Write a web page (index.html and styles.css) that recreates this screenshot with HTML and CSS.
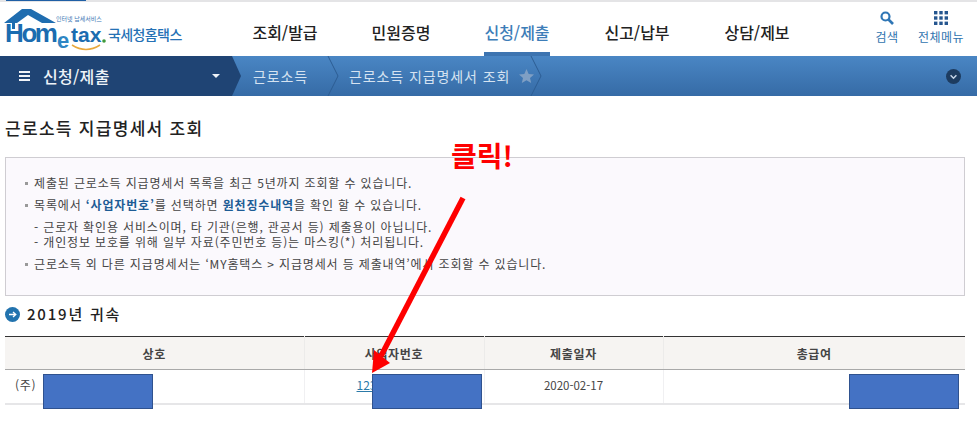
FILE: index.html
```html
<!DOCTYPE html>
<html lang="ko">
<head>
  <meta charset="UTF-8" />
  <meta name="viewport" content="width=device-width, initial-scale=1.0"/>
  <title>근로소득 지급명세서 조회</title>
  <link rel="stylesheet" href="styles.css">
</head>
<body>

  <div class="top-stripe"><span></span></div>

  <header class="site-header">
    <a class="logo">
      <svg width="190" height="54" viewBox="0 0 190 54">
        <path d="M4 21 L22 7 L31 7 L56 21 L42 21 L28 13 L17 21 L15 21 L15 27 L12 27 L12 21 Z" fill="#1f6db0"/>
        <text x="56" y="19" class="logo-small">인터넷 납세서비스</text>
        <text x="5" y="40" class="logo-home">Hom</text>
        <text x="57" y="46" class="logo-e">e</text>
        <text x="71" y="40" class="logo-tax">tax</text>
        <circle cx="104" cy="39" r="1.8" fill="#3f9a3c"/>
        <path d="M72 43 Q86 52 100 43" fill="none" stroke="#e9a83c" stroke-width="1.5"/>
        <text x="108" y="38" class="logo-name">국세청홈택스</text>
      </svg>
    </a>
    <nav class="main-nav">
      <a>조회/발급</a>
      <a>민원증명</a>
      <a class="active">신청/제출</a>
      <a>신고/납부</a>
      <a>상담/제보</a>
    </nav>
    <div class="tools">
      <a class="tool">
        <svg width="14" height="14" viewBox="0 0 14 14">
          <circle cx="5.5" cy="5.5" r="4" fill="none" stroke="#2f76b5" stroke-width="2.2"/>
          <path d="M8.5 8.5 L13 13" stroke="#2f76b5" stroke-width="2.6"/>
        </svg>
        <span>검색</span>
      </a>
      <a class="tool">
        <svg width="14" height="14" viewBox="0 0 14 14" fill="#25568f">
          <rect x="0" y="0" width="3.4" height="3.4"/><rect x="5.3" y="0" width="3.4" height="3.4"/><rect x="10.6" y="0" width="3.4" height="3.4"/>
          <rect x="0" y="5.3" width="3.4" height="3.4"/><rect x="5.3" y="5.3" width="3.4" height="3.4"/><rect x="10.6" y="5.3" width="3.4" height="3.4"/>
          <rect x="0" y="10.6" width="3.4" height="3.4"/><rect x="5.3" y="10.6" width="3.4" height="3.4"/><rect x="10.6" y="10.6" width="3.4" height="3.4"/>
        </svg>
        <span>전체메뉴</span>
      </a>
    </div>
  </header>

  <div class="crumbs">
    <div class="crumb-main">
      <span class="burger"><i></i><i></i><i></i></span>
      <span class="crumb-title">신청/제출</span>
      <span class="caret"></span>
    </div>
    <span class="crumb c1">근로소득</span>
    <svg class="chev" width="12" height="40" viewBox="0 0 12 40"><path d="M1 0 L11 20 L1 40" fill="none" stroke="#2c5d93" stroke-width="1"/></svg>
    <span class="crumb c2">근로소득 지급명세서 조회</span>
    <svg class="star" width="15" height="14" viewBox="0 0 15 14"><path d="M7.5 0 L9.7 4.9 L15 5.4 L11 9 L12.2 14 L7.5 11.3 L2.8 14 L4 9 L0 5.4 L5.3 4.9 Z" fill="#7f9fc4"/></svg>
    <svg class="chev c3" width="12" height="40" viewBox="0 0 12 40"><path d="M1 0 L11 20 L1 40" fill="none" stroke="#2c5d93" stroke-width="1"/></svg>
    <span class="more">
      <svg width="15" height="15" viewBox="0 0 15 15"><circle cx="7.5" cy="7.5" r="7.5" fill="#1d3c60"/><path d="M4.6 6.2 L7.5 9.2 L10.4 6.2" fill="none" stroke="#c6d5e6" stroke-width="1.5"/></svg>
    </span>
  </div>

  <main class="content">
    <h1 class="page-title">근로소득 지급명세서 조회</h1>

    <section class="notice">
      <p class="item">제출된 근로소득 지급명세서 목록을 최근 5년까지 조회할 수 있습니다.</p>
      <p class="item">목록에서 <b>‘사업자번호’</b>를 선택하면 <b>원천징수내역</b>을 확인 할 수 있습니다.</p>
      <div class="sub">
        <p>- 근로자 확인용 서비스이며, 타 기관(은행, 관공서 등) 제출용이 아닙니다.</p>
        <p>- 개인정보 보호를 위해 일부 자료(주민번호 등)는 마스킹(*) 처리됩니다.</p>
      </div>
      <p class="item">근로소득 외 다른 지급명세서는 ‘MY홈택스 &gt; 지급명세서 등 제출내역’에서 조회할 수 있습니다.</p>
    </section>

    <h2 class="year">
      <svg width="15" height="15" viewBox="0 0 15 15"><circle cx="7.5" cy="7.5" r="7.5" fill="#2273ae"/><path d="M4 7.5 H10.5 M8 5 L10.8 7.5 L8 10" fill="none" stroke="#fff" stroke-width="1.3"/></svg>
      2019년 귀속
    </h2>

    <table class="result">
      <colgroup>
        <col class="col-name"><col class="col-num"><col class="col-date"><col class="col-pay">
      </colgroup>
      <thead>
        <tr><th>상호</th><th>사업자번호</th><th>제출일자</th><th>총급여</th></tr>
      </thead>
      <tbody>
        <tr><td class="left">(주)</td><td><a class="num">123-45-67890</a></td><td class="date">2020-02-17</td><td></td></tr>
      </tbody>
    </table>
  </main>

  <!-- masked values and the annotation drawn on top of the capture -->
  <div class="mask m1"></div>
  <div class="mask m2"></div>
  <div class="mask m3"></div>
  <div class="click-label">클릭!</div>
  <svg class="arrow" width="110" height="185" viewBox="0 0 110 185">
    <path d="M101 8 L19 166" stroke="#fe0000" stroke-width="5.5" fill="none"/>
    <path d="M10 183 L12 160 L28 173 Z" fill="#fe0000"/>
  </svg>

</body>
</html>
```

FILE: styles.css
```css
body {
  margin: 0;
  font-family: "Noto Sans CJK KR", "Noto Sans", sans-serif;
  background-color: #fff;
  color: #333;
  overflow: hidden;
}
p, h1, h2 {
  margin: 0;
}

.top-stripe {
  height: 2px;
  background-color: #e4e4e6;
}
.top-stripe span {
  display: block;
  width: 80px;
  height: 1px;
  margin-left: 6px;
  background-color: #1f5fa5;
}

/* header */
.site-header {
  display: flex;
  height: 54px;
}
.logo {
  width: 252px;
  flex: none;
}
.logo svg {
  display: block;
}
.logo-small {
  font-size: 6px;
  fill: #3c78b4;
}
.logo-home {
  font-family: "Liberation Sans", sans-serif;
  font-size: 26px;
  font-weight: bold;
  fill: #1b6cb0;
  letter-spacing: -2.4px;
}
.logo-tax {
  font-family: "Liberation Sans", sans-serif;
  font-size: 21px;
  font-weight: bold;
  fill: #1b6cb0;
}
.logo-e {
  font-family: "Liberation Sans", sans-serif;
  font-size: 22px;
  font-weight: bold;
  fill: #2e86c4;
}
.logo-name {
  font-size: 14px;
  font-weight: 500;
  fill: #2571b5;
  letter-spacing: -0.6px;
}
.main-nav {
  display: flex;
  gap: 50px;
}
.main-nav a {
  position: relative;
  width: 66px;
  padding-top: 19px;
  text-align: center;
  white-space: nowrap;
  font-size: 16px;
  font-weight: 500;
  line-height: 22px;
  color: #222;
}
.main-nav a:nth-child(n+4) {
  margin-left: 4px;
}
.main-nav a.active {
  color: #3d7db8;
  border-bottom: 4px solid #3d74b0;
  box-sizing: border-box;
  height: 54px;
}
.tools {
  display: flex;
  margin-left: 72px;
  gap: 4px;
}
.tool {
  display: flex;
  flex-direction: column;
  align-items: center;
  width: 50px;
  padding-top: 9px;
  font-size: 12px;
  color: #2f73ae;
  letter-spacing: 0.5px;
  white-space: nowrap;
}
.tool span {
  margin-top: 3px;
  line-height: 18px;
}

/* breadcrumb bar */
.crumbs {
  display: flex;
  align-items: center;
  height: 40px;
  background: linear-gradient(#4a86c4, #366ba6);
  font-size: 14px;
  color: #d6e3f1;
}
.crumb-main {
  display: flex;
  align-items: center;
  box-sizing: border-box;
  width: 241px;
  height: 40px;
  padding: 0 21px 0 19px;
  flex: none;
  background-color: #1f4474;
  clip-path: polygon(0 0, 232px 0, 241px 50%, 232px 100%, 0 100%);
  color: #eef3f8;
}
.burger {
  display: flex;
  flex-direction: column;
  gap: 2px;
  width: 11px;
}
.burger i {
  display: block;
  height: 2px;
  background-color: #f1f4f8;
}
.crumb-title {
  margin-left: 13px;
  font-size: 16px;
  font-weight: 500;
  letter-spacing: 0.3px;
}
.caret {
  margin-left: auto;
  border-left: 4px solid transparent;
  border-right: 4px solid transparent;
  border-top: 4px solid #eef3f8;
}
.crumb {
  white-space: nowrap;
  font-size: 14px;
  letter-spacing: 0.9px;
}
.c1 {
  margin-left: 12px;
  width: 58px;
}
.chev {
  margin-left: 16px;
  flex: none;
}
.c2 {
  margin-left: 10px;
  width: 164px;
}
.star {
  margin-left: 6px;
  flex: none;
}
.chev.c3 {
  margin-left: -4px;
}
.more {
  display: flex;
  margin-left: auto;
  margin-right: 16px;
}

/* content */
.content {
  width: 960px;
  margin-left: 5px;
}
.page-title {
  margin-top: 21px;
  font-size: 17px;
  font-weight: 500;
  line-height: 22px;
  color: #222;
  letter-spacing: 1.3px;
}
.notice {
  box-sizing: border-box;
  height: 139px;
  margin-top: 18px;
  padding: 16px 19px 0;
  border: 1px solid #cfcdd2;
  background-color: #fbf9fd;
  font-size: 12px;
  line-height: 18px;
  color: #444;
  letter-spacing: 0.85px;
}
.item {
  position: relative;
  padding-left: 9px;
  margin-bottom: 4px;
  white-space: nowrap;
}
.item::before {
  content: "";
  position: absolute;
  left: 0;
  top: 8px;
  width: 3px;
  height: 3px;
  background-color: #999;
}
.item b {
  font-weight: 700;
  color: #1d5c95;
}
.sub {
  margin: 5px 0 6px;
  padding-left: 9px;
  line-height: 15px;
  white-space: nowrap;
}
.year {
  display: flex;
  align-items: center;
  gap: 7px;
  margin-top: 8px;
  font-size: 15px;
  font-weight: 500;
  line-height: 20px;
  color: #222;
  letter-spacing: 1.8px;
}
.result {
  width: 960px;
  margin-top: 12px;
  table-layout: fixed;
  border-collapse: collapse;
  border-top: 1px solid #333;
  border-bottom: 2px solid #e6e6e8;
  font-size: 12px;
  letter-spacing: 0.7px;
}
.col-name { width: 299px; }
.col-num { width: 180px; }
.col-date { width: 179px; }
.col-pay { width: 302px; }
.result th {
  height: 32px;
  padding: 0;
  background-color: #f6f4f2;
  border-bottom: 1px solid #a9a9a9;
  border-left: 1px solid #ecebea;
  font-weight: 700;
  color: #444;
}
.result th:first-child,
.result td:first-child {
  border-left: 0;
}
.result td {
  height: 29px;
  padding: 0 0 4px;
  border-left: 1px solid #f0f0f2;
  text-align: center;
  color: #444;
}
.result td.left {
  padding-left: 10px;
  text-align: left;
}
.result td.date {
  font-size: 11.5px;
  letter-spacing: 0;
}
.num {
  color: #2c7aa8;
  text-decoration: underline;
  letter-spacing: 0;
}

/* overlays */
.mask {
  position: absolute;
  top: 374px;
  box-sizing: border-box;
  width: 110px;
  height: 35px;
  background-color: #4472c4;
  border: 1px solid #2f528f;
}
.m1 { left: 43px; }
.m2 { left: 372px; }
.m3 { left: 849px; }
.click-label {
  position: absolute;
  left: 451px;
  top: 136px;
  font-size: 28px;
  font-weight: 700;
  line-height: 38px;
  color: #fe0000;
}
.arrow {
  position: absolute;
  left: 362px;
  top: 190px;
}
```
